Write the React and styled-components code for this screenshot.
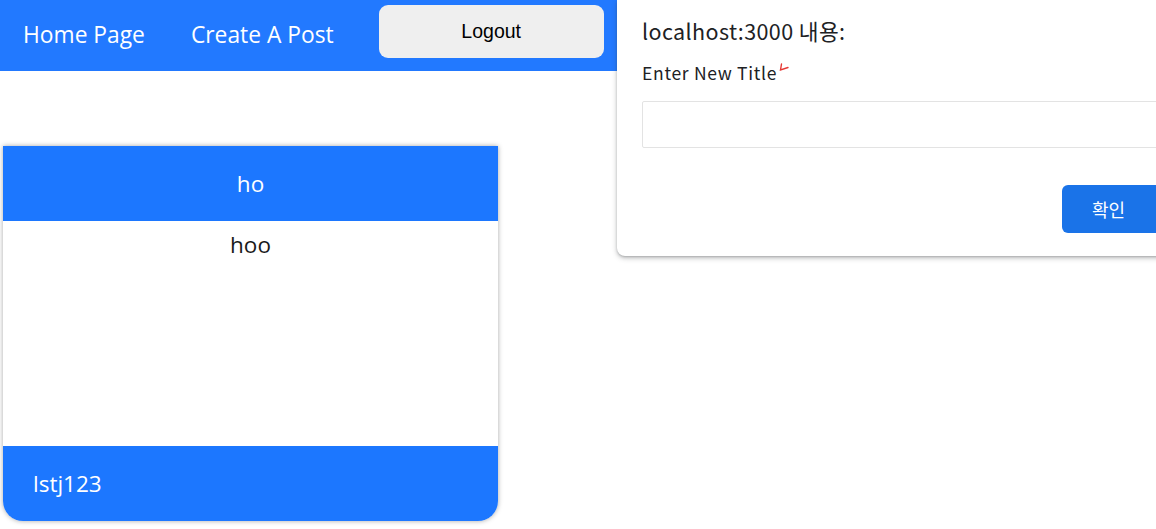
import React from 'react'
import styled, { createGlobalStyle } from 'styled-components'

const GlobalStyle = createGlobalStyle`
body{
margin:0;
font-family:"Open Sans","Noto Sans",sans-serif;
background:#fff;
}
`
const Page = styled.div`
position:relative;
width:100%;
height:529px;
overflow:hidden;
`
const Navbar = styled.nav`
height:71px;
display:flex;
align-items:flex-start;
padding-left:23px;
background-color:#2279ff;
`
const NavLink = styled.a`
color:#fff;
font-size:22.8px;
line-height:70px;
margin-right:46px;
text-decoration:none;
white-space:nowrap;
`
const LogoutButton = styled.button`
width:225px;
height:53px;
margin-top:5px;
margin-left:-1px;
border:none;
border-radius:9px;
background-color:#efefef;
font-family:"Liberation Sans",Arial,sans-serif;
font-size:19.5px;
color:#000;
`
const Main = styled.main`
padding:75px 0 0 3px;
`
const Card = styled.div`
width:495px;
height:375px;
display:flex;
flex-direction:column;
border-radius:0 0 20px 20px;
box-shadow:0 0 5px rgba(0,0,0,0.35);
overflow:hidden;
`
const CardHeader = styled.div`
height:75px;
display:flex;
align-items:center;
justify-content:center;
background-color:#1c77ff;
color:#fff;
font-size:22.5px;
`
const CardBody = styled.div`
flex:1;
text-align:center;
padding-top:6px;
font-size:22.5px;
color:#1a1a1a;
line-height:36px;
`
const CardFooter = styled.div`
height:75px;
display:flex;
align-items:center;
padding-left:30px;
background-color:#1c77ff;
color:#fff;
font-size:22.5px;
`
const Dialog = styled.div`
position:absolute;
top:0;
left:617px;
width:570px;
height:256px;
box-sizing:border-box;
padding:13px 0 0 25px;
background:#fff;
border-radius:0 0 0 8px;
box-shadow:0 2px 5px rgba(60,64,67,0.35), 0 1px 2px rgba(60,64,67,0.2);
font-family:"Noto Sans CJK KR","Noto Sans",sans-serif;
color:#202124;
`
const DialogTitle = styled.div`
font-size:21.5px;
line-height:36px;
letter-spacing:0.4px;
`
const Label = styled.div`
display:flex;
align-items:flex-start;
margin-top:11px;
font-size:17.5px;
line-height:26px;
letter-spacing:0.7px;
`
const Input = styled.input`
display:block;
width:600px;
height:47px;
box-sizing:border-box;
margin-top:15px;
border:1px solid #e3e3e3;
border-radius:2px;
`
const Actions = styled.div`
display:flex;
margin-top:37px;
padding-left:420px;
`
const OkButton = styled.button`
width:110px;
height:48px;
border:none;
border-radius:6px;
background-color:#1a73e8;
color:#fff;
font-family:"Noto Sans CJK KR",sans-serif;
font-size:18px;
text-align:left;
padding-left:30px;
`

const App = () => {
    return (
        <Page>
            <GlobalStyle />
            <Navbar>
                <NavLink>Home Page</NavLink>
                <NavLink>Create A Post</NavLink>
                <LogoutButton>Logout</LogoutButton>
            </Navbar>
            <Main>
                <Card>
                    <CardHeader>ho</CardHeader>
                    <CardBody>hoo</CardBody>
                    <CardFooter>lstj123</CardFooter>
                </Card>
            </Main>
            <Dialog>
                <DialogTitle>localhost:3000 내용:</DialogTitle>
                <Label>
                    Enter New Title
                    <svg width="14" height="16" viewBox="0 0 14 16">
                        <path d="M4.5 4 L3.5 10 L11 7.5" fill="none" stroke="#e53935" strokeWidth="1.4" strokeLinecap="round" />
                    </svg>
                </Label>
                <Input />
                <Actions>
                    <OkButton>확인</OkButton>
                </Actions>
            </Dialog>
        </Page>
    )
}

export default App
